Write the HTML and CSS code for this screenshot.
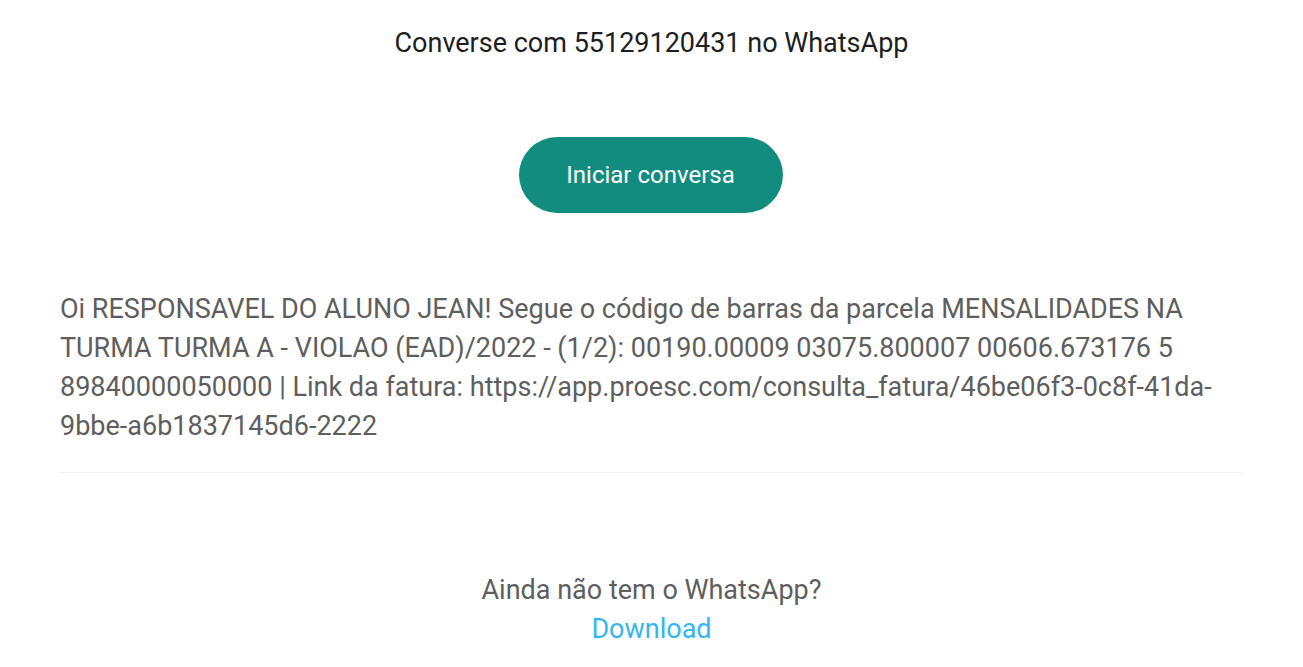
FILE: index.html
```html
<!DOCTYPE html>
<html lang="pt-BR">
<head>
  <meta charset="UTF-8" />
  <meta name="viewport" content="width=device-width, initial-scale=1.0" />
  <title>Converse com 55129120431 no WhatsApp</title>
  <link rel="stylesheet" href="styles.css">
</head>
<body>
  <div class="container" role="main">
    <h1 class="title">Converse com 55129120431 no WhatsApp</h1>

    <div class="action">
      <a class="start-btn" href="#">Iniciar conversa</a>
    </div>

    <p class="message">Oi RESPONSAVEL DO ALUNO JEAN! Segue o código de barras da parcela MENSALIDADES NA TURMA TURMA A - VIOLAO (EAD)/2022 - (1/2): 00190.00009 03075.800007 00606.673176 5 89840000050000 | Link da fatura: https://app.proesc.com/consulta_fatura/46be06f3-0c8f-41da-9bbe-a6b1837145d6-2222</p>

    <div class="footer">
      <p class="hint">Ainda não tem o WhatsApp?</p>
      <a class="download" href="#">Download</a>
    </div>
  </div>
</body>
</html>
```

FILE: styles.css
```css
:root {
  --text-dark: #1c1e21;
  --text-gray: #5e5e5e;
  --green: #128c7e;
  --link: #34b7f1;
  --line: #eef0f3;
}

body {
  font-family: Roboto, 'Noto Sans', sans-serif;
  background-color: #fff;
  margin: 0;
  padding: 0;
}

.container {
  padding: 0 60px;
}

.title {
  margin: 0;
  padding-top: 24px;
  font-size: 27px;
  font-weight: 400;
  line-height: 39px;
  text-align: center;
  color: var(--text-dark);
}

.action {
  display: flex;
  justify-content: center;
  padding-top: 74px;
}

.start-btn {
  display: flex;
  align-items: center;
  justify-content: center;
  width: 264px;
  height: 76px;
  margin-left: -2px;
  border-radius: 38px;
  background-color: var(--green);
  color: #fff;
  font-size: 24px;
  text-decoration: none;
}

.message {
  margin: 77px 0 0;
  padding-bottom: 26px;
  font-size: 27px;
  line-height: 39px;
  color: var(--text-gray);
  border-bottom: 1px solid var(--line);
  word-wrap: break-word;
}

.footer {
  display: flex;
  flex-direction: column;
  align-items: center;
  padding-top: 98px;
  font-size: 27px;
  line-height: 39px;
}

.hint {
  margin: 0;
  color: var(--text-gray);
}

.download {
  color: var(--link);
  text-decoration: none;
}
```
